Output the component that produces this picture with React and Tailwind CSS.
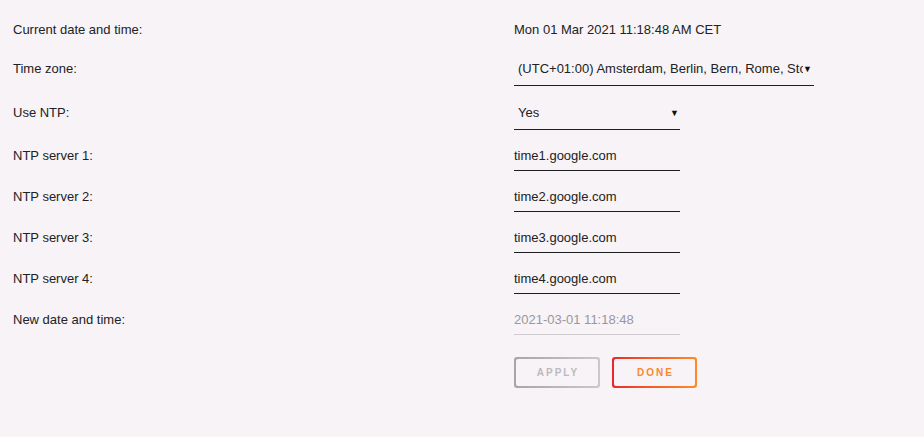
import React from 'react';

const Label = ({ children }) => (
  <div className="w-[501px] shrink-0 text-[13px] leading-4 text-[#222]">{children}</div>
);

const Caret = () => <span className="text-[9px] leading-4 text-[#111]">▼</span>;

const TextField = ({ value, pb = 'pb-[6px]' }) => (
  <div className={`w-[166px] border-b border-[#1f1f1f] text-[13px] leading-4 text-[#222] ${pb}`}>{value}</div>
);

const App = () => {
  return (
    <div className="min-h-[437px] w-[924px] bg-[#f7f3f7] pl-[13px] pt-[22px] font-['Liberation_Sans',Arial,sans-serif]">
      <div className="flex items-baseline">
        <Label>Current date and time:</Label>
        <div className="text-[13px] leading-4 text-[#222]">Mon 01 Mar 2021 11:18:48 AM CET</div>
      </div>

      <div className="mt-[23px] flex items-baseline">
        <Label>Time zone:</Label>
        <div className="flex w-[300px] items-start border-b border-[#1f1f1f] pb-[8px] pl-[4px] pr-[2px]">
          <div className="flex-1 overflow-hidden whitespace-nowrap text-[13px] leading-4 text-[#222]">
            (UTC+01:00) Amsterdam, Berlin, Bern, Rome, Stockholm, Vienna
          </div>
          <Caret />
        </div>
      </div>

      <div className="mt-[18px] flex items-baseline">
        <Label>Use NTP:</Label>
        <div className="flex w-[166px] items-start justify-between border-b border-[#1f1f1f] pb-[8px] pl-[4px] pr-[1px] pt-[1px]">
          <div className="text-[13px] leading-4 text-[#222]">Yes</div>
          <Caret />
        </div>
      </div>

      {['time1.google.com', 'time2.google.com', 'time3.google.com', 'time4.google.com'].map((host, i) => (
        <div key={host} className="mt-[18px] flex items-baseline">
          <Label>NTP server {i + 1}:</Label>
          <TextField value={host} />
        </div>
      ))}

      <div className="mt-[18px] flex items-baseline">
        <Label>New date and time:</Label>
        <div className="w-[166px] border-b border-[#cfcbcf] pb-[6px] text-[13px] leading-4 text-[#9a979a]">
          2021-03-01 11:18:48
        </div>
      </div>

      <div className="mt-[22px] flex gap-[12px] pl-[501px]">
        <button className="h-[31px] w-[86px] rounded-[3px] bg-gradient-to-r from-[#a6a5a7] to-[#cbc8cb] p-[2px]">
          <span className="flex h-full w-full items-center justify-center rounded-[2px] bg-[#f7f3f7] pl-[2px] text-[10px] font-bold tracking-[0.2em] text-[#bdbabd]">
            APPLY
          </span>
        </button>
        <button className="h-[31px] w-[85px] rounded-[3px] bg-gradient-to-r from-[#e8262a] to-[#ff8a24] p-[2px]">
          <span className="flex h-full w-full items-center justify-center rounded-[2px] bg-[#f7f3f7] pl-[2px] text-[10px] font-bold tracking-[0.2em] text-[#f98a2c]">
            DONE
          </span>
        </button>
      </div>
    </div>
  );
};

export default App;
